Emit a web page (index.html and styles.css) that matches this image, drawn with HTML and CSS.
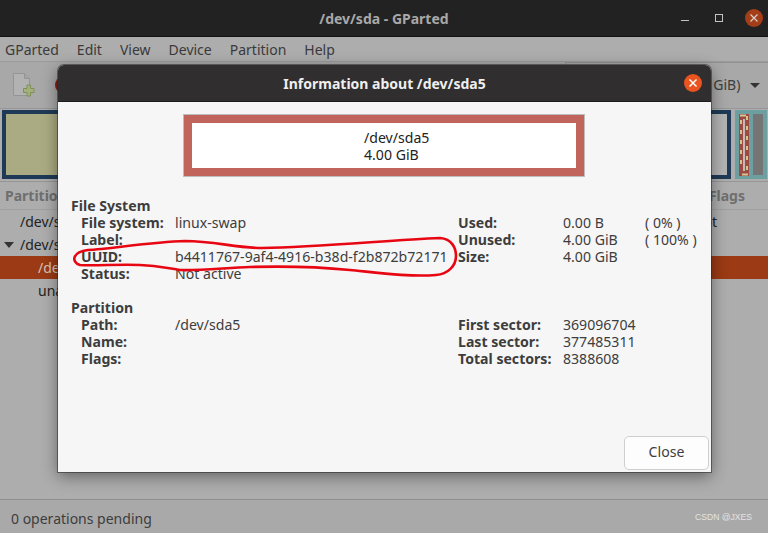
FILE: index.html
```html
<!DOCTYPE html>
<html lang="en">
<head>
<meta charset="utf-8">
<title>/dev/sda - GParted</title>
<link rel="stylesheet" href="styles.css">
</head>
<body>
<div class="window">
  <header class="titlebar">
    <span class="title">/dev/sda - GParted</span>
    <div class="winbtns">
      <svg class="wb" width="14" height="14" viewBox="0 0 14 14"><path d="M2 9.500h8" stroke="#c4c4c4" stroke-width="1"/></svg>
      <svg class="wb" width="14" height="14" viewBox="0 0 14 14"><rect x="3.500" y="3.500" width="7" height="7" fill="none" stroke="#c4c4c4" stroke-width="1"/></svg>
      <svg class="wb" width="18" height="18" viewBox="0 0 18 18"><circle cx="9" cy="9" r="9" fill="#a33e18"/><path d="M5.500 5.500l7 7M12.500 5.500l-7 7" stroke="#d8d0cc" stroke-width="1.200"/></svg>
    </div>
  </header>
  <nav class="menubar">
    <span>GParted</span><span>Edit</span><span>View</span><span>Device</span><span>Partition</span><span>Help</span>
  </nav>
  <div class="toolbar">
    <svg width="22" height="24" viewBox="0 0 22 24"><path d="M0.500 0.500h11l5 5v17h-16z" fill="#b2b2b2" stroke="#949494"/><path d="M11.500 0.500v5h5" fill="#a4a4a4" stroke="#949494"/><path d="M14 12h3.500v3.500h3.500v4h-3.500v3.500h-3.500v-3.500h-3.500v-4h3.500z" fill="#a3b178" stroke="#7e8f58"/></svg>
    <span class="stop"></span>
    <div class="combo">(4 GiB) <i class="caret"></i></div>
  </div>
  <div class="graph">
    <div class="part-a"></div>
    <div class="part-b"></div>
    <div class="part-c">
      <svg class="swap" width="10" height="62" viewBox="0 0 10 62">
        <rect width="10" height="62" fill="#9c4a44"/>
        <path d="M2 6v50M8 2v58" fill="none" stroke="#d3c78f" stroke-width="2" stroke-dasharray="4 6"/>
        <path d="M5 5v52" stroke="#c9b9b4" stroke-width="2"/>
        <path d="M1 1.500h6M3 60.500h6" stroke="#d3c78f" stroke-width="2"/>
      </svg>
      <div class="unalloc"></div>
    </div>
  </div>
  <div class="table">
    <div class="thead"><b>Partition</b><b>Flags</b></div>
    <div class="row"><span class="cell">/dev/sda1</span><span>boot</span></div>
    <div class="row"><span class="cell"><i class="tri"></i>/dev/sda2</span></div>
    <div class="row sel"><span class="cell sub">/dev/sda5</span></div>
    <div class="row"><span class="cell sub">unallocated</span></div>
  </div>
  <footer class="status">
    <span>0 operations pending</span>
    <span class="mark">CSDN @JXES</span>
  </footer>
</div>

<section class="dialog">
  <header class="dlg-title">
    <span>Information about /dev/sda5</span>
    <svg class="dlg-x" width="18" height="18" viewBox="0 0 18 18"><circle cx="9" cy="9" r="9" fill="#e95420"/><path d="M5.500 5.500l7 7M12.500 5.500l-7 7" stroke="#fff" stroke-width="1.500"/></svg>
  </header>
  <div class="dlg-body">
    <div class="pbox"><div class="pinner"><div>/dev/sda5<br>4.00 GiB</div></div></div>
    <div class="info">
      <h3>File System</h3>
      <div class="grid">
        <b>File system:</b><span>linux-swap</span><b>Used:</b><span>0.00 B</span><span>( 0% )</span>
        <b>Label:</b><span></span><b>Unused:</b><span>4.00 GiB</span><span>( 100% )</span>
        <b>UUID:</b><span>b4411767-9af4-4916-b38d-f2b872b72171</span><b>Size:</b><span>4.00 GiB</span><span></span>
        <b>Status:</b><span>Not active</span><b></b><span></span><span></span>
      </div>
      <h3 class="second">Partition</h3>
      <div class="grid">
        <b>Path:</b><span>/dev/sda5</span><b>First sector:</b><span>369096704</span><span></span>
        <b>Name:</b><span></span><b>Last sector:</b><span>377485311</span><span></span>
        <b>Flags:</b><span></span><b>Total sectors:</b><span>8388608</span><span></span>
      </div>
    </div>
    <div class="actions"><button class="close" type="button">Close</button></div>
  </div>
</section>

<svg class="scribble" width="768" height="533" viewBox="0 0 768 533">
  <path d="M88 250C110 249 150 242 185 241C215 241 235 248 262 248C320 247 390 240 440 238C452 239 456 248 456 256C456 266 448 274 436 275C410 277 380 273 350 270C320 267 285 266 250 267C225 268 195 271 180 270C165 268 160 266 140 265C120 264 95 266 80 265C71 262 72 252 88 250Z" fill="none" stroke="#e80613" stroke-width="2.600"/>
</svg>
</body>
</html>
```
FILE: styles.css
```css
* { box-sizing: border-box; }
html, body { margin: 0; padding: 0; }
body {
  width: 768px;
  height: 533px;
  overflow: hidden;
  position: relative;
  font-family: "Noto Sans", "Open Sans", "Liberation Sans", sans-serif;
  font-size: 14px;
  color: #3d3d3d;
  background: #adadad;
}
.window { display: flex; flex-direction: column; height: 533px; }
.titlebar {
  height: 37px;
  flex: none;
  background: #232222;
  border-bottom: 1px solid #111;
  display: flex;
  align-items: center;
  justify-content: center;
  position: relative;
  color: #a8a8a8;
  font-weight: 700;
}
.winbtns { position: absolute; right: 5px; top: 9px; display: flex; gap: 19px; align-items: center; }
.menubar {
  height: 25px;
  flex: none;
  display: flex;
  gap: 18px;
  align-items: center;
  padding-left: 5px;
  color: #3a3a3a;
  background: #adadad;
  border-bottom: 1px solid #9b9b9b;
}
.toolbar {
  height: 47px;
  flex: none;
  display: flex;
  align-items: center;
  gap: 20px;
  padding-left: 13px;
  position: relative;
  background: #a8a8a8;
  border-bottom: 1px solid #959595;
}
.stop { width: 16px; height: 16px; border-radius: 50%; background: #8e1c1c; }
.combo {
  position: absolute;
  left: 565px;
  top: 0;
  right: 0;
  height: 100%;
  border-top: 1px solid #929292;
  border-left: 1px solid #929292;
  color: #3d3d3d;
  text-align: right;
  padding: 12px 8px 0 0;
}
.caret {
  display: inline-block;
  width: 0;
  height: 0;
  margin-left: 6px;
  vertical-align: 2px;
  border: 5px solid transparent;
  border-top: 5px solid #333;
  border-bottom: 0;
}
.graph { height: 72px; flex: none; display: flex; padding: 1px 1px 2px 2px; background: #adadad; gap: 4px; }
.part-a { width: 200px; background: #abab83; border: 4px solid #1f3a56; }
.part-b { flex: 1; background: #b3b3b3; border: 4px solid #1f3a56; }
.part-c { width: 32px; background: #6d9ea0; padding: 4px; display: flex; gap: 4px; }
.swap { flex: none; display: block; }
.unalloc { flex: 1; background: #757575; }
.table { flex: 1; background: #adadad; border-top: 1px solid #969696; font-size: 14px; }
.thead {
  height: 28px;
  display: flex;
  justify-content: space-between;
  align-items: center;
  padding: 0 23px 0 5px;
  color: #6f6f6f;
  border-bottom: 1px solid #a0a0a0;
}
.row { height: 23px; display: flex; justify-content: space-between; align-items: center; padding: 0 0 0 20px; color: #222; white-space: nowrap; }
.row > span:last-child:not(.cell) { margin-right: 51px; }
.cell { position: relative; }
.sub { padding-left: 18px; }
.sel { background: #9b3a15; color: #d8c2b8; }
.tri {
  position: absolute;
  left: -16px;
  top: 7px;
  border: 5px solid transparent;
  border-top: 6px solid #333;
  border-bottom: 0;
}
.status {
  height: 34px;
  flex: none;
  border-top: 1px solid #8e8e8e;
  background: #a9a9a9;
  display: flex;
  justify-content: space-between;
  align-items: center;
  padding: 3px 16px 0 11px;
  color: #3d3d3d;
}
.mark { font-size: 8.6px; color: #e4e4e4; font-family: "Liberation Sans", sans-serif; position: relative; top: -1px; }
.dialog {
  position: absolute;
  left: 58px;
  top: 65px;
  width: 653px;
  height: 407px;
  background: #f6f6f6;
  border-radius: 6px 6px 0 0;
  box-shadow: 0 0 0 1px rgba(40,40,40,.55), 0 4px 16px rgba(0,0,0,.45);
  display: flex;
  flex-direction: column;
}
.dlg-title {
  height: 37px;
  flex: none;
  background: #302e2e;
  border-bottom: 1px solid #1c1c1c;
  border-radius: 6px 6px 0 0;
  color: #efefef;
  font-weight: 700;
  display: flex;
  align-items: center;
  justify-content: center;
  position: relative;
}
.dlg-x { position: absolute; right: 9px; top: 9px; }
.dlg-body { flex: 1; display: flex; flex-direction: column; padding: 12px 2px 2px 13px; min-height: 0; font-size: 14.1px; }
.pbox {
  width: 402px;
  height: 63px;
  margin-left: 112px;
  flex: none;
  background: #c1655c;
  border: 1px solid #bdbdbd;
  padding: 8px;
}
.pinner { height: 100%; background: #fff; display: flex; align-items: center; padding-left: 172px; line-height: 17px; color: #222; }
.info { flex: 1; line-height: 17px; color: #3d3d3d; padding-top: 20px; }
h3 { margin: 0; font-size: 14.1px; font-weight: 700; line-height: 17px; }
h3.second { margin-top: 17px; }
.grid { display: grid; grid-template-columns: 94px 283px 105px 82px 70px; padding-left: 10px; white-space: nowrap; }
.grid > :nth-child(5n+1) { min-height: 17px; }
.actions { display: flex; justify-content: flex-end; flex: none; }
.close {
  width: 85px;
  height: 34px;
  border: 1px solid #cfcfcf;
  border-radius: 5px;
  background: #fdfdfd;
  font: inherit;
  color: #3d3d3d;
  padding: 0 0 3px;
}
.scribble { position: absolute; left: 0; top: 0; pointer-events: none; }
```
